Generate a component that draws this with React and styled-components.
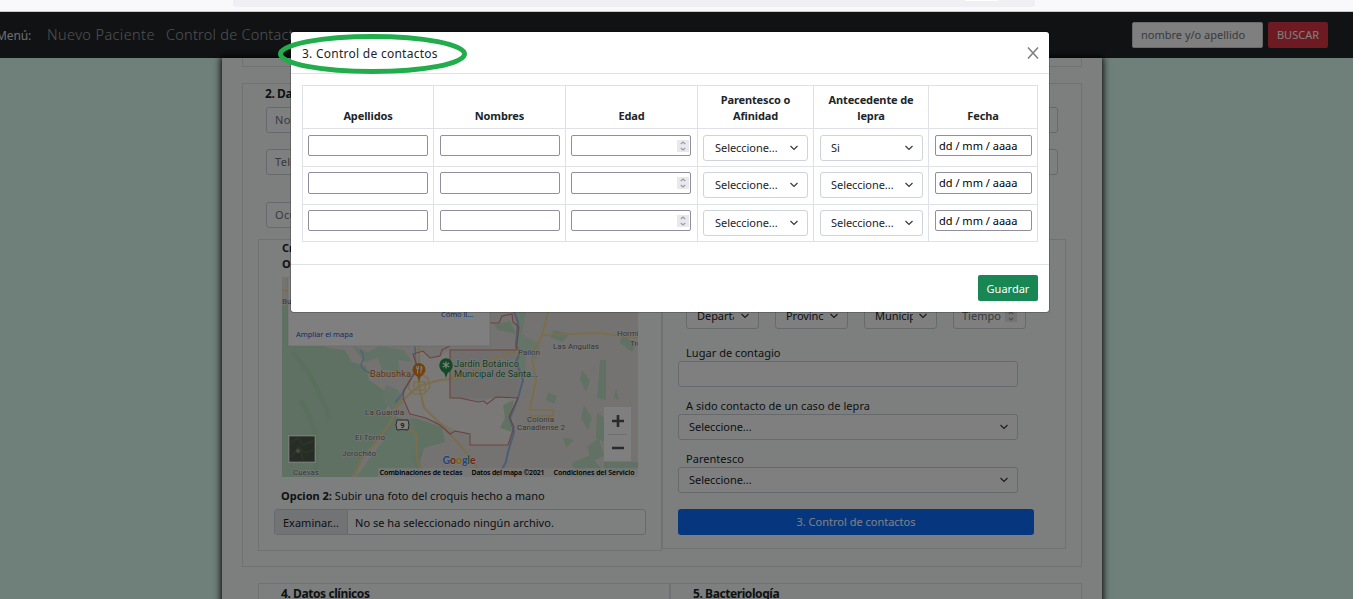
import React from "react";
import styled, { createGlobalStyle } from "styled-components";

const Global = createGlobalStyle`
  *, *::before, *::after { box-sizing: border-box; }
  html, body { margin: 0; background: #fff; overflow: hidden; }
  body { font-family: "Noto Sans", "Open Sans", sans-serif; font-size: 11px; line-height: 16px; color: #212529; }
`;

const Window = styled.div`
  position: relative;
  width: 1353px;
  height: 599px;
  overflow: hidden;
  display: flex;
  flex-direction: column;
`;

const BrowserStrip = styled.div`
  flex: none;
  height: 12px;
  background: #f9f9fb;
  border-bottom: 1px solid #c9cacd;
  padding-left: 233px;
`;
const AddressBar = styled.div`
  width: 802px;
  height: 7px;
  background: #f0f0f4;
  border-radius: 0 0 3px 3px;
  padding-left: 732px;
`;
const ZoomPill = styled.div`
  width: 33px;
  height: 1px;
  background: #fff;
`;

const Navbar = styled.nav`
  flex: none;
  height: 46px;
  background: #212529;
  display: flex;
  align-items: center;
  white-space: nowrap;
`;
const Brand = styled.span`
  width: 51px;
  margin-left: -4px;
  font-size: 12px;
  color: #dcdcdc;
  letter-spacing: -0.1px;
  padding-top: 1px;
`;
const NavLink = styled.a`
  width: ${(p) => p.$w}px;
  font-size: 14.5px;
  font-weight: 300;
  letter-spacing: ${(p) => p.$ls || 0}px;
  color: #a0a2a3;
  padding-bottom: 2px;
`;
const SearchInput = styled.div`
  margin-left: auto;
  width: 131px;
  height: 26px;
  border: 1px solid #ced4da;
  border-radius: 2px;
  background: #fff;
  color: #6c757d;
  padding: 4px 8px;
`;
const SearchButton = styled.div`
  width: 60px;
  height: 26px;
  margin: 0 25px 0 5px;
  border-radius: 2px;
  background: #dc3545;
  color: #fff;
  text-align: center;
  line-height: 26px;
`;

const Body = styled.main`
  flex: 1;
  min-height: 0;
  background: #dffff2;
  padding-left: 222px;
`;
const Page = styled.div`
  width: 880px;
  height: 560px;
  padding: 0 20px;
  background: #fbfffd;
  box-shadow: 0 0 7px 1px #000;
`;
const PreviousSection = styled.div`
  height: 9px;
  border: 1px solid #dee2e6;
  border-top: 0;
`;
const Section = styled.section`
  height: 484px;
  margin: 16px 0;
  border: 1px solid #dee2e6;
  background: #f8fffc;
  padding: 1px 15px 0;
`;
const SectionTitle = styled.h2`
  margin: 0;
  padding-left: ${(p) => p.$pad || 0}px;
  font-size: 12px;
  line-height: 18px;
  font-weight: 700;
  letter-spacing: -0.42px;
`;
const Fields = styled.div`
  padding: 0 8px;
  height: 132px;
`;
const Field = styled.div`
  width: ${(p) => p.$w || "100%"};
  height: 26px;
  border: 1px solid #ced4da;
  border-radius: 3px;
  background: #fdffff;
  color: #6c757d;
  padding: 4px 8px;
  margin-top: ${(p) => p.$gap || 0}px;
  letter-spacing: 0.3px;
`;
const Columns = styled.div`
  display: flex;
  align-items: flex-start;
`;
const LeftPanel = styled.div`
  width: 404px;
  height: 312px;
  border: 1px solid #dee2e6;
  padding: 0 15px;
`;
const PanelHeading = styled.div`
  padding-left: 8px;
  font-weight: 700;
  line-height: 16px;
`;
const MapFrame = styled.div`
  margin: 5px 0 0 8px;
  width: 356px;
  height: 200px;
  overflow: hidden;
  svg { display: block; }
`;
const OptionText = styled.div`
  padding: 11px 0 0 7px;
  line-height: 16px;
  letter-spacing: 0.01px;
  white-space: nowrap;
`;
const FileInput = styled.div`
  display: flex;
  width: 372px;
  height: 26px;
  margin-top: 5px;
  border: 1px solid #ced4da;
  border-radius: 3px;
  background: #fdffff;
  line-height: 25px;
  white-space: nowrap;
  overflow: hidden;
`;
const FileButton = styled.span`
  width: 73px;
  padding-left: 8px;
  background: #e4e7eb;
  border-right: 1px solid #ced4da;
`;
const FileName = styled.span`
  padding-left: 7px;
  letter-spacing: 0.02px;
`;
const RightPanel = styled.div`
  width: 404px;
  height: 310px;
  border: 1px solid #dee2e6;
  padding: 63px 31px 0 15px;
`;
const PlaceRow = styled.div`
  display: flex;
  gap: 16px;
  padding-left: 8px;
  margin-bottom: 16px;
`;
const SelectBox = styled.div`
  display: flex;
  align-items: center;
  justify-content: space-between;
  flex: none;
  width: ${(p) => p.$w}px;
  height: 26px;
  border: 1px solid #ced4da;
  border-radius: 3px;
  background: #fff;
  color: ${(p) => (p.$muted ? "#6c757d" : "#212529")};
  padding: 0 ${(p) => p.$right ?? 9}px 0 ${(p) => p.$left ?? 10}px;
  white-space: nowrap;
`;
const SelectText = styled.span`
  max-width: ${(p) => (p.$clip ? `${p.$clip}px` : "none")};
  overflow: hidden;
  letter-spacing: -0.05px;
`;
const FieldLabel = styled.div`
  padding-left: 8px;
  height: 16px;
  line-height: 16px;
  letter-spacing: 0.04px;
`;
const ContactField = styled.div`
  width: 340px;
  margin-bottom: ${(p) => p.$mb}px;
`;
const TextInput = styled.div`
  width: 340px;
  height: 26px;
  border: 1px solid #ced4da;
  border-radius: 3px;
  background: #fff;
`;
const PrimaryButton = styled.div`
  width: 356px;
  height: 26px;
  border-radius: 3px;
  background: #0d6efd;
  color: #fff;
  line-height: 26px;
  text-align: center;
`;
const NextSections = styled.div`
  display: flex;
  padding-left: 16px;
`;
const NextSection = styled.div`
  width: 412px;
  height: 60px;
  border: 1px solid #dee2e6;
  background: #f8fffc;
  padding-top: 1px;
`;

const Backdrop = styled.div`
  position: absolute;
  inset: 12px 0 0 0;
  background: rgba(0, 0, 0, 0.5);
  padding: 20px 0 0 291px;
`;
const Modal = styled.div`
  width: 758px;
  height: 280px;
  background: #fff;
  border-radius: 3px;
  box-shadow: 0 0 0 1px rgba(0, 0, 0, 0.2);
`;
const ModalHeader = styled.header`
  display: flex;
  justify-content: space-between;
  align-items: center;
  height: 42px;
  padding: 0 10px 0 11px;
  border-bottom: 1px solid #dee2e6;
`;
const ModalTitle = styled.h1`
  margin: 0;
  padding-top: 2px;
  font-size: 12px;
  font-weight: 400;
  letter-spacing: 0.26px;
`;
const ModalBody = styled.div`
  padding: 11px 11px 22px;
`;
const Table = styled.div`
  display: grid;
  grid-template-columns: 131px 132px 132px 116px 115px 109px;
  grid-template-rows: 43px 38px 38px 37px;
  width: 736px;
  border: solid #dee2e6;
  border-width: 0 1px 1px 0;
`;
const HeadCell = styled.div`
  border: solid #dee2e6;
  border-width: 1px 0 0 1px;
  display: flex;
  align-items: flex-end;
  justify-content: center;
  text-align: center;
  font-weight: 700;
  letter-spacing: -0.12px;
  padding: 0 12px 4px;
`;
const Cell = styled.div`
  border: solid #dee2e6;
  border-width: 1px 0 0 1px;
  padding: ${(p) => (p.$first ? 6 : 5)}px 0 0 ${(p) => (p.$inset ? 6 : 5)}px;
`;
const NativeInput = styled.div`
  width: ${(p) => p.$w}px;
  height: ${(p) => p.$h}px;
  border: 1px solid #8f8f9d;
  border-radius: 2px;
  display: flex;
  justify-content: ${(p) => (p.$number ? "flex-end" : "flex-start")};
  align-items: center;
  padding: 0 ${(p) => (p.$number ? 1 : 3)}px;
  color: #000;
  white-space: nowrap;
`;
const Spinner = styled.span`
  display: flex;
  width: 12px;
  height: 12px;
  background: #e9e9ed;
  svg { display: block; }
`;
const ModalFooter = styled.footer`
  display: flex;
  justify-content: flex-end;
  border-top: 1px solid #dee2e6;
  padding: 10px 11px;
`;
const SaveButton = styled.div`
  width: 60px;
  height: 26px;
  border-radius: 2px;
  background: #198754;
  color: #fff;
  text-align: center;
  line-height: 27px;
`;
const Highlight = styled.svg`
  position: absolute;
  left: 275px;
  top: 32px;
`;

const Chevron = () => (
  <svg width="8" height="6" viewBox="0 0 8 6" fill="none" stroke="#343a40" strokeWidth="1.2">
    <path d="M0.5 1 L4 4.4 L7.5 1" />
  </svg>
);

const Spin = () => (
  <Spinner>
    <svg width="12" height="12" viewBox="0 0 12 12" fill="none" stroke="#9a9aa2" strokeWidth="1.2">
      <path d="M3.8 4 L6 2 L8.2 4 M3.8 8 L6 10 L8.2 8" />
    </svg>
  </Spinner>
);

const Select = ({ text, clip, ...box }) => (
  <SelectBox {...box}>
    <SelectText $clip={clip}>{text}</SelectText>
    <Chevron />
  </SelectBox>
);

const label = { fontFamily: "Roboto, sans-serif", fill: "#6b6b6b", stroke: "#f3f1ef", strokeWidth: 1.2, paintOrder: "stroke" };

const CityMap = () => (
  <svg width="356" height="200" viewBox="282 277 356 200">
    <rect x="282" y="277" width="356" height="200" fill="#eae6e2" />
    <path d="M282 305 L290 300 L300 335 L330 348 L345 350 L352 362 L366 366 L369 380 L392 396 L385 412 L404 420 L398 430 L378 440 L366 452 L352 477 L282 477Z" fill="#bde3c5" />
    <path d="M352 346 L368 352 L380 346 L404 350 L412 362 L398 360 L400 372 L382 370 L378 358 L364 362Z" fill="#c6e5cc" />
    <path d="M386 385 L398 390 L404 402 L392 410 L382 400Z" fill="#c6e5cc" />
    <path d="M405 420 L414 418 L442 427 L445 442 L424 448 L420 462 L424 477 L372 477 L384 452Z" fill="#bde3c5" />
    <path d="M395 425 L412 420 L418 440 L410 456 L420 477 L356 477 L376 450Z" fill="#c3e6ca" />
    <path d="M292 352 Q315 375 330 420 M300 400 Q322 430 315 470" stroke="#b2dabb" strokeWidth="5" fill="none" opacity=".6" />
    <path d="M360 350 Q366 356 362 362 T372 374" stroke="#9cc3ee" strokeWidth="1.3" fill="none" />
    <path d="M403 395 L410 415 L440 422 L455 430 L469 434 L470 445 L508 445 L514 427 L509 417 L518 398 L498 397 L478 402 L450 398 L450 350 L438 357 L430 357 L423 352 L413 354 L416 372 L408 386Z" fill="#f7f3f0" />
    <path d="M450 350 H516 L520 380 L517 398 L450 398Z" fill="#e3dfdc" />
    <path d="M516 312 H526 L522 334 L540 345 L536 360 L526 352 L525 378 L518 372 L517 340Z" fill="#c9e8cf" />
    <path d="M503 405 L514 400 L510 420 L512 432 L500 428 L505 418Z M494 325 L510 321 L516 334 L498 330Z M554 330 L570 334 L562 342 L550 337Z M600 360 L606 360 L606 400 L597 398Z M582 370 L590 380 L586 392 L580 380Z M584 405 L592 418 L588 430 L581 418Z M597 412 L607 420 L604 442 L596 438Z M616 388 L619 400 L614 398Z M622 333 L636 345 L632 352 L620 343Z M588 446 L599 438 L604 456 L590 462Z M572 463 L590 455 L603 470 L598 477 L576 477Z M604 462 L638 462 L638 470 L604 472Z M548 392 L557 396 L554 404 L546 400Z M563 437 L574 440 L566 448Z" fill="#c2e4c8" />
    <path d="M282 290 L300 293 M548 312 L542 335 L532 358 L536 380 L530 410 L553 410 V416 H530 L529 425 M542 335 L600 333 L638 338" stroke="#f3dc9c" strokeWidth="2.2" fill="none" />
    <path d="M419 386 L398 404 L392 420 L378 440 L362 458 L354 477 M419 386 L440 380 L466 378 L495 358 L520 350 M419 386 L424 408 L445 428 L464 450 L484 477 M419 346 V386 M402 428 L416 432 L417 460 L424 477" stroke="#f3dc9c" strokeWidth="2.2" fill="none" />
    <path d="M411 377 L419 373 L428 378 L430 387 L424 394 L414 394 L408 388Z M414 382 H425 V390 H414Z" stroke="#f5dda0" strokeWidth="1.6" fill="none" />
    <path d="M514 312 L518 322 L516 346 L520 352 L516 362 L523 380 L518 398 L510 418 L514 432 L508 452 L506 462 L498 477" stroke="#9dbfe6" strokeWidth="2.2" fill="none" />
    <path d="M415 346 L416 370 L402 394 L395 403" stroke="#a9c4e4" strokeWidth="1.8" fill="none" />
    <path d="M490 323 L499 323 L502 316 L512 314 L513 322 L519 327 L516 350 H450 V398 L460 398 L478 402 L484 401 L487 404 L496 397 L518 398 L509 417 L514 427 L508 445 H470 V434 L455 431 L450 434 L440 425 L426 418 L410 414 L403 398 L404 390 L414 374 L417 366 L413 354 L423 351 L430 358 L440 356 L442 350 L450 346" stroke="#d98580" strokeWidth="1.1" fill="none" />
    <rect x="288" y="277" width="202" height="69" fill="#fff" stroke="#c9c7c5" strokeWidth=".5" />
    <g fontFamily="Noto Sans, sans-serif" fill="#1a60d8" fontSize="7.5">
      <text x="296" y="337" textLength="57">Ampliar el mapa</text>
      <text x="441" y="317" textLength="32">Cómo ll...</text>
    </g>
    <g {...label} fontSize="8">
      <text x="282" y="304">Bu</text>
      <text x="518" y="355" textLength="22">Pailon</text>
      <text x="553" y="349" textLength="46">Las Anguilas</text>
      <text x="617" y="336" textLength="26">Hormig</text>
      <text x="630" y="346">Tres</text>
      <text x="527" y="422" textLength="27">Colonia</text>
      <text x="517" y="429.5" textLength="48">Canadiense 2</text>
      <text x="365" y="415" textLength="39">La Guardia</text>
      <text x="355" y="440" textLength="30">El Torno</text>
      <text x="342" y="456" textLength="34">Jorochito</text>
      <text x="293" y="475" textLength="26">Cuevas</text>
    </g>
    <g {...label} fontSize="9.3">
      <text x="370" y="376.5" textLength="41" fill="#c5681a">Babushka</text>
      <text x="454" y="367" textLength="65" fill="#187c3c">Jardín Botánico</text>
      <text x="454" y="376.5" textLength="84" fill="#187c3c">Municipal de Santa...</text>
    </g>
    <path d="M419 382 L417.5 377 C414 374 412.5 372.5 412.5 369.5 A6.5 6.5 0 0 1 425.5 369.5 C425.5 372.5 424 374 420.5 377Z" fill="#e8871b" />
    <path d="M416.8 366 V369 M418.4 366 V369 M417.6 368 V373.5 M421 373.5 V366 C422.5 367 422.3 369 421 370" stroke="#fff" strokeWidth="1" fill="none" />
    <path d="M446 378 L444.2 373 C441 371 439.3 368.5 439.3 365 A6.7 6.7 0 0 1 452.7 365 C452.7 368.5 451 371 447.8 373Z" fill="#24934d" />
    <path d="M446 361.5 V368.5 M442.8 363 L449.2 367 M449.2 363 L442.8 367" stroke="#fff" strokeWidth="1.3" />
    <path d="M397 420 H408 Q410 425 408 430 Q402 429 397 430 Q395 425 397 420Z" fill="#fff" stroke="#555" strokeWidth="1" />
    <text x="402.5" y="428" textAnchor="middle" fontFamily="Roboto" fontSize="7.5" fontWeight="700" fill="#444">9</text>
    <rect x="288.7" y="435.7" width="26.6" height="26.6" fill="#4c5b4a" stroke="#f5f5f5" strokeWidth="1.3" />
    <path d="M290 443 L298 438 L303 445 L313 441 M291 457 L298 448 L306 453 L313 450 M303 460 L299 446" stroke="#5b6855" strokeWidth="1.5" fill="none" />
    <circle cx="298" cy="451" r="2" fill="#93937e" />
    <rect x="604" y="407" width="27" height="54" fill="#fff" />
    <path d="M608 434.5 H627" stroke="#dedede" />
    <path d="M612 421 H624 M618 415 V427 M612 448 H624" stroke="#555" strokeWidth="2.6" />
    <text x="442.5" y="464" fontFamily="Lato, sans-serif" fontWeight="700" fontSize="10.5" textLength="33" stroke="#fff" strokeWidth="1" paintOrder="stroke">
      <tspan fill="#4285f4">G</tspan><tspan fill="#ea4335">o</tspan><tspan fill="#fbbc05">o</tspan><tspan fill="#4285f4">g</tspan><tspan fill="#34a853">l</tspan><tspan fill="#ea4335">e</tspan>
    </text>
    <rect x="378" y="468" width="260" height="9" fill="#f3f3f3" opacity=".75" />
    <g fontFamily="Noto Sans, sans-serif" fontSize="7" fontWeight="600" fill="#000">
      <text x="379.5" y="475" textLength="83">Combinaciones de teclas</text>
      <text x="471.5" y="475" textLength="73">Datos del mapa ©2021</text>
      <text x="553.5" y="475" textLength="81">Condiciones del Servicio</text>
    </g>
  </svg>
);

const columns = ["Apellidos", "Nombres", "Edad", "Parentesco o Afinidad", "Antecedente de lepra", "Fecha"];
const rows = [
  { h: 21, history: "Si" },
  { h: 22, history: "Seleccione..." },
  { h: 21, history: "Seleccione..." },
];

export default function App() {
  return (
    <Window>
      <Global />
      <BrowserStrip><AddressBar><ZoomPill /></AddressBar></BrowserStrip>
      <Navbar>
        <Brand>Menú:</Brand>
        <NavLink $w={119} $ls={0.4}>Nuevo Paciente</NavLink>
        <NavLink $w={160} $ls={0.24}>Control de Contactos</NavLink>
        <SearchInput>nombre y/o apellido</SearchInput>
        <SearchButton>BUSCAR</SearchButton>
      </Navbar>
      <Body>
        <Page>
          <PreviousSection />
          <Section>
            <SectionTitle $pad={7}>2. Datos</SectionTitle>
            <Fields>
              <Field $gap={4}>Nombre</Field>
              <Field $gap={16}>Teléfono</Field>
              <Field $gap={27} $w="380px">Ocupación</Field>
            </Fields>
            <Columns>
              <LeftPanel>
                <PanelHeading>Croquis</PanelHeading>
                <PanelHeading>Opcion 1:</PanelHeading>
                <MapFrame><CityMap /></MapFrame>
                <OptionText><b>Opcion 2:</b> Subir una foto del croquis hecho a mano</OptionText>
                <FileInput>
                  <FileButton>Examinar...</FileButton>
                  <FileName>No se ha seleccionado ningún archivo.</FileName>
                </FileInput>
              </LeftPanel>
              <RightPanel>
                <PlaceRow>
                  <Select $w={73} text="Departamento" clip={37} />
                  <Select $w={73} text="Provincia" clip={38} />
                  <Select $w={73} text="Municipio" clip={38} />
                  <SelectBox $w={73} $muted $left={8} $right={8}>Tiempo<Spin /></SelectBox>
                </PlaceRow>
                <ContactField $mb={11}>
                  <FieldLabel>Lugar de contagio</FieldLabel>
                  <TextInput />
                </ContactField>
                <ContactField $mb={11}>
                  <FieldLabel>A sido contacto de un caso de lepra</FieldLabel>
                  <Select $w={340} text="Seleccione..." />
                </ContactField>
                <ContactField $mb={16}>
                  <FieldLabel>Parentesco</FieldLabel>
                  <Select $w={340} text="Seleccione..." />
                </ContactField>
                <PrimaryButton>3. Control de contactos</PrimaryButton>
              </RightPanel>
            </Columns>
          </Section>
          <NextSections>
            <NextSection><SectionTitle $pad={22}>4. Datos clínicos</SectionTitle></NextSection>
            <NextSection><SectionTitle $pad={22}>5. Bacteriología</SectionTitle></NextSection>
          </NextSections>
        </Page>
      </Body>
      <Backdrop>
        <Modal>
          <ModalHeader>
            <ModalTitle>3. Control de contactos</ModalTitle>
            <svg width="12" height="12" viewBox="0 0 12 12" stroke="#7d7d7d" strokeWidth="1.5">
              <path d="M1 0.5 L11 11.5 M11 0.5 L1 11.5" />
            </svg>
          </ModalHeader>
          <ModalBody>
            <Table>
              {columns.map((name) => <HeadCell key={name}>{name}</HeadCell>)}
              {rows.map((row, i) => (
                <React.Fragment key={i}>
                  <Cell $first={i === 0}><NativeInput $w={120} $h={row.h} /></Cell>
                  <Cell $first={i === 0} $inset><NativeInput $w={120} $h={row.h} /></Cell>
                  <Cell $first={i === 0}><NativeInput $w={120} $h={row.h} $number><Spin /></NativeInput></Cell>
                  <Cell $first={i === 0}><Select $w={105} $left={11} text="Seleccione..." /></Cell>
                  <Cell $first={i === 0} $inset><Select $w={103} text={row.history} /></Cell>
                  <Cell $first={i === 0} $inset><NativeInput $w={97} $h={row.h}>dd / mm / aaaa</NativeInput></Cell>
                </React.Fragment>
              ))}
            </Table>
          </ModalBody>
          <ModalFooter><SaveButton>Guardar</SaveButton></ModalFooter>
        </Modal>
      </Backdrop>
      <Highlight width="196" height="44" viewBox="0 0 196 44" fill="none" stroke="#22ad4c" strokeWidth="5">
        <ellipse cx="97.5" cy="22" rx="92" ry="17.5" />
      </Highlight>
    </Window>
  );
}
